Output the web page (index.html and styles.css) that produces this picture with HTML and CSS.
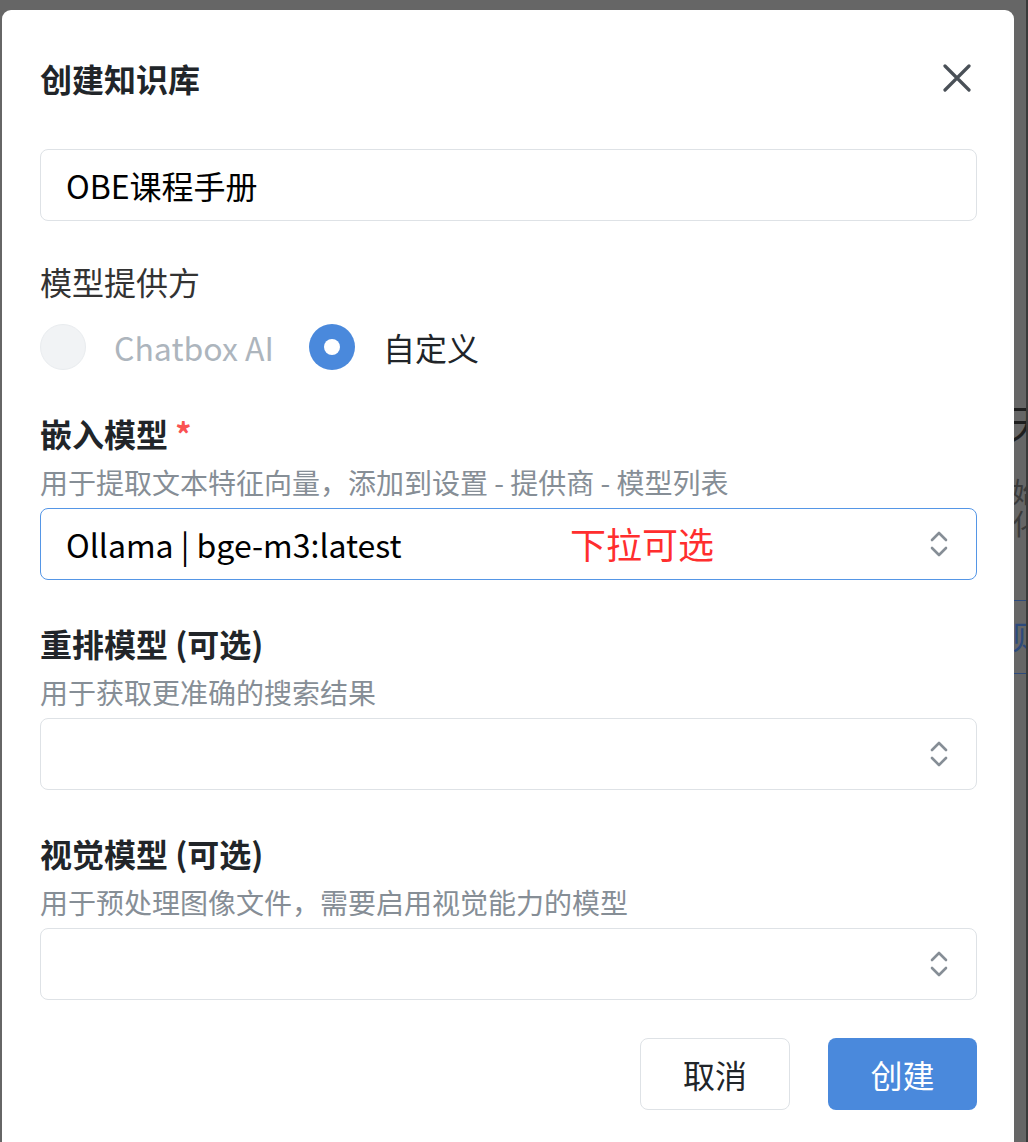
FILE: index.html
```html
<!DOCTYPE html>
<html lang="zh-CN">
<head>
    <meta charset="UTF-8">
    <meta name="viewport" content="width=device-width, initial-scale=1.0">
    <title>创建知识库</title>
    <link rel="stylesheet" href="styles.css">
</head>
<body>
    <div class="page">
        <div class="modal">
            <div class="modal-header">
                <h2 class="modal-title">创建知识库</h2>
                <button class="close-btn" aria-label="关闭">
                    <svg width="28" height="28" viewBox="0 0 28 28">
                        <path d="M2 2 L26 26 M26 2 L2 26" stroke="#495057" stroke-width="3.2" stroke-linecap="round" fill="none"/>
                    </svg>
                </button>
            </div>

            <input type="text" class="text-input" value="OBE课程手册">

            <div class="plain-label">模型提供方</div>
            <div class="radio-group">
                <label class="radio disabled"><span class="radio-dot"></span><span class="radio-text">Chatbox AI</span></label>
                <label class="radio checked"><span class="radio-dot"></span><span class="radio-text">自定义</span></label>
            </div>

            <div class="field">
                <div class="field-label">嵌入模型 <span class="required">*</span></div>
                <div class="field-desc">用于提取文本特征向量，添加到设置 - 提供商 - 模型列表</div>
                <div class="select active">
                    <span class="select-value">Ollama | bge-m3:latest</span>
                    <span class="annotation">下拉可选</span>
                    <svg class="chevron" width="18" height="28" viewBox="0 0 18 28">
                        <path d="M2 10 L9 3 L16 10 M2 18 L9 25 L16 18" stroke="#868e96" stroke-width="2.6" stroke-linecap="round" stroke-linejoin="round" fill="none"/>
                    </svg>
                </div>
            </div>

            <div class="field">
                <div class="field-label">重排模型 (可选)</div>
                <div class="field-desc">用于获取更准确的搜索结果</div>
                <div class="select">
                    <span class="select-value"></span>
                    <svg class="chevron" width="18" height="28" viewBox="0 0 18 28">
                        <path d="M2 10 L9 3 L16 10 M2 18 L9 25 L16 18" stroke="#868e96" stroke-width="2.6" stroke-linecap="round" stroke-linejoin="round" fill="none"/>
                    </svg>
                </div>
            </div>

            <div class="field">
                <div class="field-label">视觉模型 (可选)</div>
                <div class="field-desc">用于预处理图像文件，需要启用视觉能力的模型</div>
                <div class="select">
                    <span class="select-value"></span>
                    <svg class="chevron" width="18" height="28" viewBox="0 0 18 28">
                        <path d="M2 10 L9 3 L16 10 M2 18 L9 25 L16 18" stroke="#868e96" stroke-width="2.6" stroke-linecap="round" stroke-linejoin="round" fill="none"/>
                    </svg>
                </div>
            </div>

            <div class="modal-footer">
                <button class="btn btn-default">取消</button>
                <button class="btn btn-primary">创建</button>
            </div>
        </div>

        <!-- page behind the overlay, only a sliver shows -->
        <div class="behind">
            <div class="behind-title">天</div>
            <div class="behind-text first">始</div>
            <div class="behind-text">化</div>
            <div class="behind-tab">则</div>
        </div>
    </div>
</body>
</html>
```

FILE: styles.css
```css
body {
    margin: 0;
    background: #666666;
    font-family: "Noto Sans CJK SC", "Noto Sans", sans-serif;
    overflow: hidden;
}

.page {
    display: flex;
    align-items: flex-start;
    width: 1028px;
    height: 1142px;
}

.modal {
    box-sizing: border-box;
    width: 1012px;
    height: 1132px;
    margin: 10px 0 0 2px;
    padding: 48px 37px 0 38px;
    background: #ffffff;
    border-radius: 9px 9px 0 0;
}

.modal-header {
    display: flex;
    align-items: center;
    justify-content: space-between;
    height: 40px;
}

.modal-title {
    margin: 0;
    font-size: 32px;
    line-height: 40px;
    font-weight: 700;
    color: #212529;
}

.close-btn {
    width: 40px;
    height: 40px;
    padding: 0;
    border: none;
    background: none;
    display: flex;
    align-items: center;
    justify-content: center;
}

.text-input {
    display: block;
    box-sizing: border-box;
    width: 100%;
    height: 72px;
    margin-top: 51px;
    padding: 0 25px;
    border: 1px solid #dee2e6;
    border-radius: 8px;
    font-family: inherit;
    font-size: 32px;
    color: #000000;
    outline: none;
}

.plain-label {
    margin-top: 40px;
    font-size: 32px;
    line-height: 40px;
    color: #333333;
}

.radio-group {
    display: flex;
    align-items: center;
    gap: 35px;
    margin-top: 23px;
    height: 46px;
}

.radio {
    display: flex;
    align-items: center;
    gap: 28px;
    font-size: 32px;
}

.radio-dot {
    box-sizing: border-box;
    width: 46px;
    height: 46px;
    border-radius: 50%;
    display: flex;
    align-items: center;
    justify-content: center;
}

.radio.disabled .radio-dot {
    background: #f1f3f5;
    border: 1px solid #e9ecef;
}

.radio.disabled .radio-text {
    color: #adb5bd;
}

.radio.checked .radio-dot {
    background: #4a89dc;
}

.radio.checked .radio-dot::after {
    content: "";
    width: 16px;
    height: 16px;
    border-radius: 50%;
    background: #ffffff;
}

.radio.checked .radio-text {
    color: #212529;
}

.field {
    margin-top: 43px;
}

.field-label {
    font-size: 32px;
    line-height: 40px;
    font-weight: 700;
    color: #212529;
}

.required {
    color: #fa5252;
}

.field-desc {
    margin-top: 11px;
    font-size: 28px;
    line-height: 36px;
    color: #868e96;
}

.select {
    position: relative;
    box-sizing: border-box;
    display: flex;
    align-items: center;
    height: 72px;
    margin-top: 8px;
    padding: 0 28px 0 25px;
    border: 1px solid #dee2e6;
    border-radius: 8px;
    font-size: 32px;
    color: #000000;
}

.select.active {
    border: 1.5px solid #5596e6;
}

.select-value {
    flex: 1;
}

.chevron {
    flex-shrink: 0;
}

.annotation {
    position: absolute;
    left: 529px;
    top: 14px;
    font-size: 36px;
    line-height: 40px;
    color: #ff2e2e;
    text-shadow: 0 0 2px #ffffff, 0 0 2px #ffffff;
}

.modal-footer {
    display: flex;
    justify-content: flex-end;
    gap: 38px;
    margin-top: 38px;
}

.btn {
    box-sizing: border-box;
    width: 150px;
    height: 72px;
    border-radius: 8px;
    font-family: inherit;
    font-size: 32px;
    cursor: pointer;
}

.btn-default {
    background: #ffffff;
    border: 1px solid #dee2e6;
    color: #212529;
}

.btn-primary {
    width: 149px;
    background: #4a89dc;
    border: none;
    color: #ffffff;
}

.behind {
    box-sizing: border-box;
    width: 14px;
    height: 1142px;
    overflow: hidden;
    border-right: 2px solid #3a3a3a;
    padding-top: 398px;
}

.behind-title {
    margin-left: -6px;
    font-size: 40px;
    line-height: 48px;
    color: #1e1e1e;
}

.behind-text {
    margin-left: -2px;
    font-size: 28px;
    line-height: 32px;
    color: #3a3a3a;
}

.behind-text.first {
    margin-top: 29px;
}

.behind-tab {
    margin-top: 61px;
    padding-top: 12px;
    height: 60px;
    border-top: 1px solid #2d4a7c;
    border-bottom: 1px solid #2d4a7c;
    margin-left: -2px;
    font-size: 32px;
    line-height: 44px;
    color: #2d4a7c;
}
```
